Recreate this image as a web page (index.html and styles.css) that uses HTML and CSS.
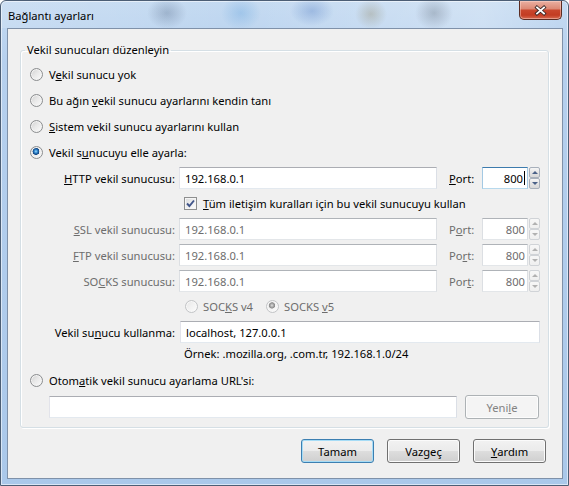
FILE: index.html
```html
<!DOCTYPE html>
<html lang="tr">
<head>
<meta charset="utf-8">
<title>Bağlantı ayarları</title>
<link rel="stylesheet" href="styles.css">
</head>
<body>
<div class="window">
  <div class="titlebar">
    <span class="title">Bağlantı ayarları</span>
    <div class="close">
      <svg width="13" height="11" viewBox="0 0 13 11">
        <path class="x-out" d="M3 2.5 L10 8.5 M10 2.5 L3 8.5"/>
        <path class="x-in" d="M3 2.5 L10 8.5 M10 2.5 L3 8.5"/>
      </svg>
    </div>
  </div>
  <div class="frame">
    <div class="client">
      <fieldset class="group">
        <legend>Vekil sunucuları düzenleyin</legend>
        <div class="opt"><span class="radio"></span><span>V<u>e</u>kil sunucu yok</span></div>
        <div class="opt"><span class="radio"></span><span>Bu ağın <u>v</u>ekil sunucu ayarlarını kendin tanı</span></div>
        <div class="opt"><span class="radio"></span><span><u>S</u>istem vekil sunucu ayarlarını kullan</span></div>
        <div class="opt"><span class="radio checked"></span><span>Vekil s<u>u</u>nucuyu elle ayarla:</span></div>

        <div class="proxy-grid">
          <span class="lbl"><u>H</u>TTP vekil sunucusu:</span>
          <div class="field">192.168.0.1</div>
          <span class="plbl"><u>P</u>ort:</span>
          <div class="port">
            <div class="field num focus">800<span class="caret"></span></div>
            <div class="spin"><span class="sb up"></span><span class="sb down"></span></div>
          </div>

          <div class="wide check-cell">
            <span class="checkbox"><svg width="11" height="11" viewBox="0 0 11 11"><path d="M2 5.5 L4.4 8 L9 2.5"/></svg></span>
            <span><u>T</u>üm iletişim kuralları için bu vekil sunucuyu kullan</span>
          </div>

          <span class="lbl dis"><u>S</u>SL vekil sunucusu:</span>
          <div class="field dis">192.168.0.1</div>
          <span class="plbl dis">P<u>o</u>rt:</span>
          <div class="port dis">
            <div class="field num dis">800</div>
            <div class="spin"><span class="sb up"></span><span class="sb down"></span></div>
          </div>

          <span class="lbl dis"><u>F</u>TP vekil sunucusu:</span>
          <div class="field dis">192.168.0.1</div>
          <span class="plbl dis">Po<u>r</u>t:</span>
          <div class="port dis">
            <div class="field num dis">800</div>
            <div class="spin"><span class="sb up"></span><span class="sb down"></span></div>
          </div>

          <span class="lbl dis">SO<u>C</u>KS sunucusu:</span>
          <div class="field dis">192.168.0.1</div>
          <span class="plbl dis">Por<u>t</u>:</span>
          <div class="port dis">
            <div class="field num dis">800</div>
            <div class="spin"><span class="sb up"></span><span class="sb down"></span></div>
          </div>

          <div class="wide socks-cell">
            <span class="radio dis"></span><span class="dis-t">SOC<u>K</u>S v4</span>
            <span class="radio dis checked v5"></span><span class="dis-t">SOCKS <u>v</u>5</span>
          </div>

          <span class="lbl">Vekil su<u>n</u>ucu kullanma:</span>
          <div class="field span3">localhost, 127.0.0.1</div>

          <div class="wide example">Örnek: .mozilla.org, .com.tr, 192.168.1.0/24</div>
        </div>

        <div class="opt auto"><span class="radio"></span><span>Otom<u>a</u>tik vekil sunucu ayarlama URL'si:</span></div>
        <div class="url-row">
          <div class="field url"></div>
          <div class="btn disabled">Yeni<u>l</u>e</div>
        </div>
      </fieldset>

      <div class="buttons">
        <div class="btn default">Tamam</div>
        <div class="btn">Vazgeç</div>
        <div class="btn"><u>Y</u>ardım</div>
      </div>
    </div>
  </div>
</div>
</body>
</html>
```
FILE: styles.css
```css
html, body {
  margin: 0;
  padding: 0;
  background: #fff;
}

body {
  font-family: "Noto Sans", "Open Sans", sans-serif;
  font-size: 11.2px;
  color: #000;
}

u {
  text-decoration: underline;
  text-underline-offset: 1px;
}

.window {
  width: 569px;
  height: 486px;
  box-sizing: border-box;
  display: flex;
  flex-direction: column;
  border: 1px solid #4c5e75;
  border-radius: 6px 6px 0 0;
  background: linear-gradient(180deg, #c4daf1 0, #b6d0ee 60px, #aac8ea 100%);
  box-shadow: inset 0 0 0 1px rgba(255, 255, 255, 0.55);
  overflow: hidden;
}

.titlebar {
  height: 27px;
  flex: none;
  display: flex;
  align-items: flex-start;
  padding-left: 7px;
  background:
    radial-gradient(ellipse 20px 16px at 166px 12px, rgba(80, 100, 130, 0.32), rgba(80, 100, 130, 0) 100%),
    radial-gradient(ellipse 20px 17px at 240px 12px, rgba(120, 175, 225, 0.45), rgba(120, 175, 225, 0) 100%),
    radial-gradient(ellipse 22px 15px at 311px 10px, rgba(70, 115, 190, 0.32), rgba(70, 115, 190, 0) 100%),
    radial-gradient(ellipse 16px 15px at 370px 13px, rgba(140, 130, 95, 0.32), rgba(140, 130, 95, 0) 100%),
    radial-gradient(ellipse 19px 17px at 433px 12px, rgba(90, 100, 115, 0.32), rgba(90, 100, 115, 0) 100%),
    linear-gradient(90deg, rgba(255, 255, 255, 0.15) 0, rgba(255, 255, 255, 0) 40%, rgba(255, 255, 255, 0.25) 85%, rgba(255, 255, 255, 0) 100%);
}

.title {
  margin-top: 7px;
  line-height: 16px;
  font-size: 11.2px;
}

.close {
  margin-left: auto;
  margin-right: 6px;
  width: 43px;
  height: 19px;
  box-sizing: border-box;
  border: 1px solid #5b2c22;
  border-top: none;
  border-radius: 0 0 5px 5px;
  background: linear-gradient(180deg, #eab0a2 0%, #dd8a76 42%, #c9472d 52%, #c33c22 78%, #d66a50 100%);
  box-shadow: inset 0 0 0 1px rgba(255, 220, 210, 0.45);
  display: flex;
  align-items: center;
  justify-content: center;
}

.close svg {
  display: block;
}

.x-out {
  stroke: #3b2a28;
  stroke-width: 3.6;
  stroke-linecap: square;
  fill: none;
}

.x-in {
  stroke: #fff;
  stroke-width: 1.8;
  stroke-linecap: square;
  fill: none;
}

.frame {
  flex: 1;
  display: flex;
  padding: 0 5px 6px 6px;
}

.client {
  flex: 1;
  display: flex;
  flex-direction: column;
  border: 1px solid #7f91a9;
  background: #f0f0f0;
}

.group {
  margin: 13px 13px 0 12px;
  padding: 3px 7px 8px 9px;
  border: 1px solid #d5dfe5;
  border-radius: 3px;
  box-shadow: inset 1px 1px 0 #fff, 1px 1px 0 #fff;
  min-width: 0;
}

.group legend {
  padding: 0 2px;
  margin-left: -5px;
  line-height: 16px;
}

.opt {
  height: 26px;
  display: flex;
  align-items: center;
  gap: 6px;
}

.opt.auto {
  margin-top: 6px;
}

.radio {
  flex: none;
  width: 13px;
  height: 13px;
  box-sizing: border-box;
  border-radius: 50%;
  border: 1px solid #8b8d8f;
  background: linear-gradient(135deg, #cfcfcf 0%, #e8e8e8 45%, #fbfbfb 100%);
  box-shadow: inset 0 0 0 1px #f3f3f3;
}

.radio.checked {
  background:
    radial-gradient(circle at 45% 40%, #a9dcf7 0, #3a93d8 1.4px, #164f8f 2.8px, #1b4f88 3.3px, rgba(0, 0, 0, 0) 3.6px),
    linear-gradient(135deg, #cfcfcf 0%, #e8e8e8 45%, #fbfbfb 100%);
}

.radio.dis {
  border-color: #c2c4c6;
  background: linear-gradient(135deg, #e6e6e6 0%, #f2f2f2 50%, #fcfcfc 100%);
  box-shadow: inset 0 0 0 1px #f8f8f8;
}

.radio.dis.checked {
  background:
    radial-gradient(circle at 45% 40%, #e2e2e2 0, #a9a9a9 1.6px, #8c8c8c 2.8px, rgba(0, 0, 0, 0) 3.5px),
    linear-gradient(135deg, #e6e6e6 0%, #f2f2f2 50%, #fcfcfc 100%);
}

.proxy-grid {
  margin-top: 2px;
  display: grid;
  grid-template-columns: 149px 258px 45px 58px;
  grid-template-rows: 22px 21px 22px 22px 22px 21px 22px 14px;
  row-gap: 4px;
  align-items: center;
}

.lbl {
  text-align: right;
  padding-right: 4px;
  white-space: nowrap;
}

.plbl {
  padding-left: 12px;
}

.dis,
.dis-t {
  color: #6d6d6d;
}

.field {
  height: 22px;
  box-sizing: border-box;
  border: 1px solid;
  border-color: #abadb3 #dbdfe6 #e3e9ef #e2e3ea;
  background: #fff;
  padding: 0 5px;
  display: flex;
  align-items: center;
  white-space: nowrap;
  overflow: hidden;
}

.field.dis {
  border-color: #afb3b8 #dcdfe3 #e3e6e9 #dcdfe3;
}

.field.span3 {
  grid-column: 2 / 5;
  margin-left: 1px;
}

.field.num {
  flex: none;
  width: 46px;
  justify-content: flex-end;
  padding: 0 2px 0 4px;
}

.field.focus {
  border-color: #3d7bad #a4c9e3 #b7d9ed #a4c9e3;
}

.caret {
  width: 1px;
  height: 14px;
  background: #000;
  margin-left: 1px;
}

.port {
  display: flex;
  gap: 1px;
  height: 22px;
}

.spin {
  flex: none;
  width: 11px;
  display: flex;
  flex-direction: column;
  gap: 0;
}

.sb {
  flex: 1;
  box-sizing: border-box;
  border: 1px solid #a8b0bb;
  border-radius: 2px;
  background: linear-gradient(180deg, #f6f6f6 0%, #e4e4e4 50%, #d8d8d8 100%);
  display: flex;
  align-items: center;
  justify-content: center;
}

.sb::after {
  content: "";
  width: 0;
  height: 0;
  border-left: 3px solid transparent;
  border-right: 3px solid transparent;
}

.sb.up::after {
  border-bottom: 3px solid #4a6187;
}

.sb.down::after {
  border-top: 3px solid #4a6187;
}

.port.dis .sb {
  border-color: #d0d3d7;
  background: linear-gradient(180deg, #f7f7f7 0%, #efefef 100%);
}

.port.dis .sb.up::after {
  border-bottom-color: #b1b1b1;
}

.port.dis .sb.down::after {
  border-top-color: #b1b1b1;
}

.wide {
  grid-column: 2 / 5;
}

.check-cell {
  display: flex;
  align-items: center;
  gap: 6px;
  padding-left: 5px;
}

.checkbox {
  flex: none;
  width: 13px;
  height: 13px;
  box-sizing: border-box;
  border: 1px solid #8e8f8f;
  background: linear-gradient(135deg, #d9dadb 0%, #eeeeee 50%, #fdfdfd 100%);
  box-shadow: inset 0 0 0 1px #f5f5f5;
  display: flex;
  align-items: center;
  justify-content: center;
}

.checkbox svg {
  display: block;
}

.checkbox path {
  fill: none;
  stroke: #41558a;
  stroke-width: 1.9;
}

.socks-cell {
  display: flex;
  align-items: center;
  gap: 5px;
  padding-left: 6px;
}

.socks-cell .v5 {
  margin-left: 8px;
}

.example {
  padding-left: 5px;
  line-height: 14px;
}

.url-row {
  margin-top: 2px;
  height: 24px;
  display: flex;
  align-items: center;
  gap: 8px;
  padding-left: 19px;
}

.field.url {
  width: 408px;
}

.btn {
  width: 73px;
  height: 24px;
  box-sizing: border-box;
  border: 1px solid #707070;
  border-radius: 3px;
  background: linear-gradient(180deg, #f2f2f2 0%, #ebebeb 48%, #dddddd 52%, #cfcfcf 100%);
  box-shadow: inset 0 0 0 1px #fbfbfb;
  display: flex;
  align-items: center;
  justify-content: center;
  flex: none;
}

.btn.disabled {
  width: 74px;
  border-color: #adb2b5;
  background: #f4f4f4;
  box-shadow: inset 0 0 0 1px #fcfcfc;
  color: #838383;
}

.btn.default {
  border-color: #3c7fb1;
  box-shadow: inset 0 0 0 1px #a6dcf6;
}

.buttons {
  display: flex;
  justify-content: flex-end;
  gap: 13px;
  margin: 11px 16px 0 0;
}
```
